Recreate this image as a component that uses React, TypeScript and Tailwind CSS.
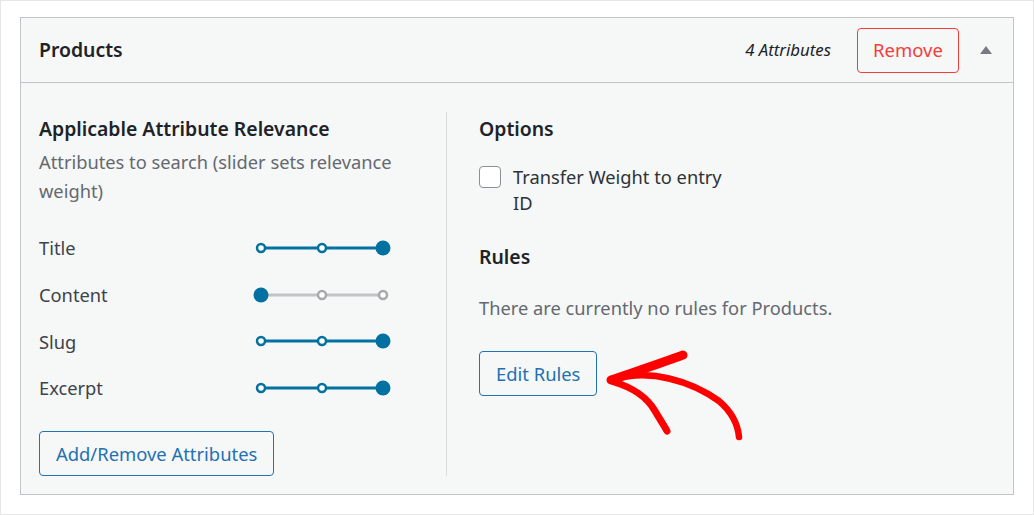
import React from "react";

const FONT = { fontFamily: '"Noto Sans", "Open Sans", Arial, sans-serif' };

interface Attr {
  label: string;
  level: number; // 0, 1, 2
}

const ATTRS: Attr[] = [
  { label: "Title", level: 2 },
  { label: "Content", level: 0 },
  { label: "Slug", level: 2 },
  { label: "Excerpt", level: 2 },
];

function Slider({ level }: { level: number }) {
  const xs = [8, 69, 130];
  const active = level > 0;
  const line = active ? "#0071a1" : "#c3c4c7";
  return (
    <svg width="140" height="18" viewBox="0 0 140 18" className="block">
      <line x1={8} y1={9} x2={130} y2={9} stroke={line} strokeWidth={3} />
      {xs.map((x, i) =>
        i === level ? (
          <circle key={i} cx={x} cy={9} r={7.5} fill="#0071a1" />
        ) : (
          <circle
            key={i}
            cx={x}
            cy={9}
            r={4}
            fill="#fff"
            stroke={active ? "#0071a1" : "#a7aaad"}
            strokeWidth={2.5}
          />
        )
      )}
    </svg>
  );
}

export default function App() {
  return (
    <div
      style={FONT}
      className="relative w-[1034px] h-[515px] bg-white border border-[#e6e6e6] pt-[16px] px-[19px] overflow-hidden"
    >
      {/* Panel */}
      <div className="border border-[#c3c4c7] bg-[#f6f7f7] h-[478px]">
        {/* Header */}
        <div className="flex items-center h-[65px] border-b border-[#c3c4c7] pl-[18px] pr-[21px]">
          <h2 className="text-[19.4px] font-semibold text-[#1d2327] flex-1">Products</h2>
          <span className="italic text-[16.8px] text-[#1d2327] mr-[26px]">4 Attributes</span>
          <button className="h-[45px] w-[102px] rounded-[4px] border border-[#f23d3d] text-[#f23d3d] text-[18.5px] bg-[#f6f7f7]">
            Remove
          </button>
          <span className="ml-[21px] w-0 h-0 border-l-[6px] border-r-[6px] border-b-[8px] border-l-transparent border-r-transparent border-b-[#787c82]" />
        </div>

        {/* Body */}
        <div className="flex pl-[18px] pt-[29px]">
          {/* Left column */}
          <div className="w-[408px] h-[364px] border-r border-[#dcdcde] flex flex-col pr-[20px]">
            <h3 className="text-[19.4px] font-semibold text-[#1d2327] leading-[34px]">
              Applicable Attribute Relevance
            </h3>
            <p className="text-[18.3px] leading-[29px] text-[#646970] mt-[1px] w-[365px]">
              Attributes to search (slider sets relevance weight)
            </p>
            <div className="mt-[34px] flex flex-col gap-[28.7px] w-[354px]">
              {ATTRS.map((a) => (
                <div key={a.label} className="flex items-center justify-between h-[18px]">
                  <span className="text-[18.3px] text-[#3c434a]">{a.label}</span>
                  <Slider level={a.level} />
                </div>
              ))}
            </div>
            <div className="mt-auto">
              <button className="h-[45px] px-[16px] rounded-[4px] border border-[#2271b1] text-[#2271b1] text-[18.4px] bg-[#f6f7f7]">
                Add/Remove Attributes
              </button>
            </div>
          </div>

          {/* Right column */}
          <div className="pl-[32px] flex flex-col">
            <h3 className="text-[19.4px] font-semibold text-[#1d2327] leading-[34px]">Options</h3>
            <label className="flex items-start mt-[20px]">
              <span className="w-[22px] h-[22px] rounded-[4px] border border-[#8c8f94] bg-white shrink-0" />
              <span className="ml-[12px] text-[18.3px] leading-[26px] text-[#2c3338] w-[220px] -mt-[2px]">
                Transfer Weight to entry ID
              </span>
            </label>
            <h3 className="text-[19.4px] font-semibold text-[#1d2327] leading-[34px] mt-[24px]">Rules</h3>
            <p className="text-[18.3px] text-[#646970] leading-[29px] mt-[19px]">
              There are currently no rules for Products.
            </p>
            <div className="mt-[29px]">
              <button className="h-[45px] px-[16px] rounded-[4px] border border-[#2271b1] text-[#2271b1] text-[18.4px] bg-[#f6f7f7]">
                Edit Rules
              </button>
            </div>
          </div>
        </div>
      </div>

      {/* Hand-drawn annotation arrow */}
      <svg
        className="absolute left-0 top-0 pointer-events-none"
        width="1034"
        height="515"
        viewBox="0 0 1034 515"
      >
        <g fill="none" stroke="#ff0000" strokeLinecap="round" strokeLinejoin="round">
          <path d="M610 379 C 630 372, 655 364, 682 354" strokeWidth={9} />
          <path d="M614 378 C 650 368, 690 380, 718 400 C 732 412, 737 425, 738 436" strokeWidth={6.5} />
          <path d="M613 381 C 630 386, 646 396, 654 410 C 660 420, 664 426, 666 430" strokeWidth={7} />
        </g>
      </svg>
    </div>
  );
}
